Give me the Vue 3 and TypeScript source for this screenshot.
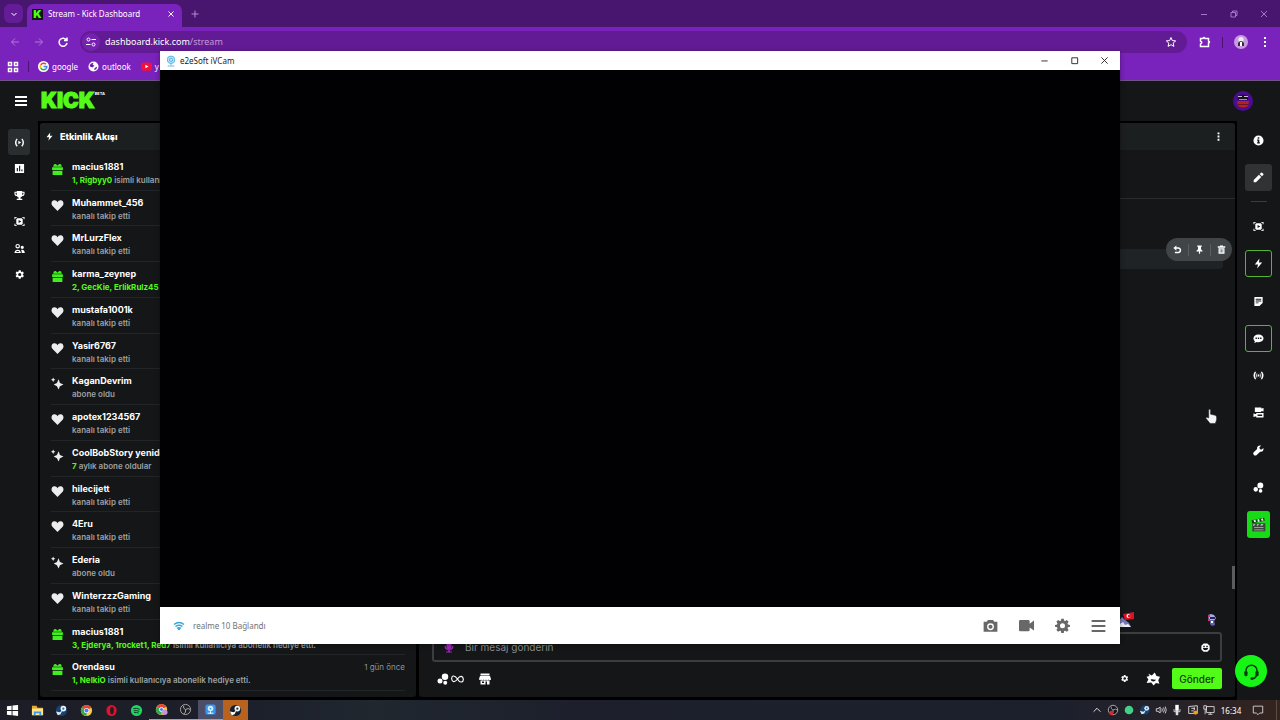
<script setup lang="ts">
import { ref } from 'vue'

type Kind = 'gift' | 'heart' | 'spark'

interface Activity {
  name: string
  kind: Kind
  lead?: string
  text: string
  time?: string
}

const icons: Record<string, string> = {
  gift: 'M2 8h20v5H2zM3 14.500h18V22H3zM5 3c2-2 5-1 7 2 2-3 5-4 7-2l1 4H4z',
  heart: 'M12 22 2.500 12.500C-.5 9 1 3 6 2.500c3-.2 5 1.500 6 3.500 1-2 3-3.700 6-3.500 5 .5 6.500 6.500 3.500 10z',
  spark: 'M14 4l2.500 7 6.500 3-6.500 3L14 23l-3-6-6-3 6-3zM4 1l1.300 2.700L8 5 5.300 6.300 4 9 2.700 6.300 0 5l2.700-1.300z',
  bolt: 'M14 1 4 14h7l-2 9L20 10h-7z',
  live: 'M6 3C1 8 1 16 6 21l2-2c-3.500-4-3.500-10 0-14zM18 3c5 5 5 13 0 18l-2-2c3.500-4 3.500-10 0-14zM9.500 8v8l6-4z',
  chart: 'M2 2h20v20H2zM6 11v7h2.500v-7zm5-5v12h2.500V6zm5 8v4h2.500v-4z',
  trophy: 'M6 2h12v2h5v4c0 3-2 5-5 5-1 2-2.500 3-4 3.500V19h4v3H6v-3h4v-2.500C8.500 16 7 15 6 13c-3 0-5-2-5-5V4h5zM3.500 6v2c0 1.500 1 2.500 2.500 2.700V6zM18 6v4.700c1.500-.2 2.500-1.200 2.500-2.700V6z',
  clip: 'M1 2h5v2H3v3H1zM18 2h5v5h-2V4h-3zM1 17h2v3h3v2H1zM21 17h2v5h-5v-2h3zM7 5h10l2 2v10l-2 2H7l-2-2V7zM10 8.500v7l6-3.500z',
  people: 'M8 2a5 5 0 1 1 0 10A5 5 0 0 1 8 2zM8 4.500a2.500 2.500 0 1 0 0 5 2.500 2.500 0 0 0 0-5zM1 22c0-10 14-10 14 0zM4.500 19.500h7c-1-3-6-3-7 0zM18 6a3.500 3.500 0 1 1 0 7 3.500 3.500 0 0 1 0-7zM17 22c0-3-.5-5-1.500-7 5-1.500 8 2 8 7z',
  gear: 'M19.400 13a7.500 7.500 0 0 0 0-2l2.200-1.700-2.200-3.800-2.600 1a8 8 0 0 0-1.700-1L14.700 2.500h-4.400L9.900 5.500a8 8 0 0 0-1.700 1l-2.600-1-2.200 3.800L5.600 11a7.500 7.500 0 0 0 0 2l-2.200 1.700 2.200 3.800 2.600-1a8 8 0 0 0 1.700 1l.4 3h4.400l.4-3a8 8 0 0 0 1.700-1l2.600 1 2.200-3.800zM12.500 15.500a3.500 3.500 0 1 1 0-7 3.500 3.500 0 0 1 0 7z',
  info: 'M12 1a11 11 0 1 0 0 22 11 11 0 0 0 0-22zM10.300 5h3.400v3.200h-3.400zM9 10h4.700v6H15v2.500H9V16h1.300v-3.500H9z',
  pencil: 'M1.500 22.500v-5L13 6l5 5L6.500 22.500zM14.500 4.500l3-3q1.500-1 3 .5l1.500 1.500q1.500 1.500.5 3l-3 3z',
  note: 'M3 2h18v13l-7 7H3zM6 6v2h12V6zm0 4v2h12v-2zm0 4v2h6v-2z',
  chat: 'M12 3c7 0 11 4 11 8.500S19 20 12 20c-2 0-3 0-4-.5L3 22l1-4.500c-2-1.500-3-3.500-3-6C1 7 5 3 12 3zM5.500 10v3h3v-3zm5 0v3h3v-3zm5 0v3h3v-3z',
  antenna: 'M4 4h3c-3 5-3 11 0 16H4C0 15 0 9 4 4zM20 4h-3c3 5 3 11 0 16h3c4-5 4-11 0-16zM9 6v12c-2.500-3-2.500-9 0-12zM15 6v12c2.500-3 2.500-9 0-12zM10.500 10h3v4h-3z',
  cameras: 'M4 1h14v2.500l5-1.500v8l-5-1.500V11H4zM7 13h16v10H7v-3l-6 2v-8l6 2zm3 3.500v3h10v-3z',
  wrench: 'M22.500 6.500 19 10l-4-1-1-4 3.500-3.500C13 0 8 3 9 8.500l-8 8c-2 4 2.500 8 6.500 6l8-8C21 16 24 11 22.500 6.500z',
  bubbles: 'M16 1a6.500 6.500 0 1 1 0 13 6.500 6.500 0 0 1 0-13zM6 11a5 5 0 1 1 0 10 5 5 0 0 1 0-10zM16.500 15.500a4 4 0 1 1 0 8 4 4 0 0 1 0-8z',
  undo: 'M9 1v5h5c10 0 11 16 0 16H5v-4h9c5 0 5-8 0-8H9v5L1 8z',
  pin: 'M6 1h12v3l-2 1v6l4 4v2h-6.500v6h-3v-6H4v-2l4-4V5L6 4z',
  trash: 'M8 1h8v2h6v4H2V3h6zM4 8.500h16V23H4zM7.500 11v9H9v-9zm3.700 0v9h1.600v-9zm3.800 0v9h1.500v-9z',
  shop: 'M3 1h18v4H3zM2 6h20l2 6c0 3-4 3-5 1-1 2-4 2-5 0-1 2-4 2-5 0-1 2-4 2-5 0-1 2-4 1-4-1zM3 15h18v8h-5v-6h-3v6H3zm3 2v3h4v-3z',
  smile: 'M7 1h10l6 6v10l-6 6H7l-6-6V7zM6 7v4h4V7zm8 0v4h4V7zM5 13c1 8 13 8 14 0z',
  badge: 'M4 3l6 3 5-5 3 6 6 1-3 6 2 6-6-1-4 4-4-5-8 1 3-6-3-5 5-1zM8 13c2 5 8 4 9 0-3 1-6-2-9 0z',
  mic: 'M12 1c3 0 5 2 5 5v6c0 6-10 6-10 0V6c0-3 2-5 5-5zM3 10h2.500c0 9 13 9 13 0H21c0 5-3 8-7.500 8.500V21H18v2H6v-2h4.500v-2.500C6 18 3 15 3 10z',
  photo: 'M8 3h8l2 3h5v16H1V6h5zM12 8.500a5.500 5.500 0 1 0 0 11 5.500 5.500 0 0 0 0-11zm0 2.200a3.300 3.300 0 1 1 0 6.600 3.300 3.300 0 0 1 0-6.600z',
  video: 'M2 3h13q2 0 2 2v4l7-5v16l-7-5v4q0 2-2 2H2q-2 0-2-2V5q0-2 2-2z',
  cogwheel: 'M10 1h4l.6 3.200 1.600.7L19 3l2.800 2.800-1.800 2.800.7 1.600L24 11v3l-3.300.8-.7 1.600 1.800 2.800L19 22l-2.800-1.800-1.600.7L14 24h-4l-.6-3.100-1.600-.7L5 22l-2.800-2.800L4 16.400l-.7-1.600L0 14v-3l3.300-.8.7-1.600-1.800-2.800L5 3l2.800 1.900 1.600-.7zM12 8.500a4 4 0 1 0 0 8 4 4 0 0 0 0-8z',
  lines: 'M1 3h22v3.200H1zm0 8h22v3.200H1zm0 8h22v3.200H1z',
}

const activities: Activity[] = [
  { name: 'macius1881', kind: 'gift', lead: '1, Rigbyy0', text: 'isimli kullanıcıya abonelik hediye etti.' },
  { name: 'Muhammet_456', kind: 'heart', text: 'kanalı takip etti' },
  { name: 'MrLurzFlex', kind: 'heart', text: 'kanalı takip etti' },
  { name: 'karma_zeynep', kind: 'gift', lead: '2, GecKie, ErlikRulz45', text: 'isimli kullanıcıya abonelik hediye etti.' },
  { name: 'mustafa1001k', kind: 'heart', text: 'kanalı takip etti' },
  { name: 'Yasir6767', kind: 'heart', text: 'kanalı takip etti' },
  { name: 'KaganDevrim', kind: 'spark', text: 'abone oldu' },
  { name: 'apotex1234567', kind: 'heart', text: 'kanalı takip etti' },
  { name: 'CoolBobStory yeniden', kind: 'spark', lead: '7', text: 'aylık abone oldular' },
  { name: 'hilecijett', kind: 'heart', text: 'kanalı takip etti' },
  { name: '4Eru', kind: 'heart', text: 'kanalı takip etti' },
  { name: 'Ederia', kind: 'spark', text: 'abone oldu' },
  { name: 'WinterzzzGaming', kind: 'heart', text: 'kanalı takip etti' },
  { name: 'macius1881', kind: 'gift', lead: '3, Ejderya, 1rocket1, Red7', text: 'isimli kullanıcıya abonelik hediye etti.' },
  { name: 'Orendasu', kind: 'gift', lead: '1, NelkiO', text: 'isimli kullanıcıya abonelik hediye etti.', time: '1 gün önce' },
]

const leftNav = ['live', 'chart', 'trophy', 'clip', 'people', 'gear']
const topTools = ['info', 'pencil']
const tools = ['clip', 'bolt', 'note', 'chat', 'antenna', 'cameras', 'wrench', 'bubbles', 'clapper']
const outlined = ['bolt', 'chat']
const cameraTools = ['photo', 'video', 'cogwheel', 'lines']
const message = ref('')
const address = 'dashboard.kick.com'
</script>

<template>
  <div class="desktop">
    <section class="browser">
      <div class="tabs">
        <button class="tab-menu" aria-label="Tabs"><svg viewBox="0 0 10 10"><path class="stroke" d="M2.500 4 5 6.500 7.500 4" /></svg></button>
        <div class="tab">
          <span class="favicon">K</span>
          <span class="tab-title">Stream - Kick Dashboard</span>
          <button class="tab-close" aria-label="Close tab"><svg viewBox="0 0 10 10"><path class="stroke" d="M2.500 2.500l5 5m0-5-5 5" /></svg></button>
        </div>
        <button class="new-tab" aria-label="New tab"><svg viewBox="0 0 10 10"><path class="stroke" d="M5 1.500v7M1.500 5h7" /></svg></button>
        <div class="win-buttons">
          <button aria-label="Minimize"><svg viewBox="0 0 10 10"><path class="thin" d="M2 5.500h6" /></svg></button>
          <button aria-label="Restore"><svg viewBox="0 0 10 10"><path class="thin" d="M2 3.500h4.500V8H2zM3.500 3.500V2H8v4.500H6.500" /></svg></button>
          <button aria-label="Close"><svg viewBox="0 0 10 10"><path class="thin" d="M2 2l6 6m0-6L2 8" /></svg></button>
        </div>
      </div>

      <div class="toolbar">
        <button class="tool dim" aria-label="Back"><svg viewBox="0 0 12 12"><path class="stroke" d="M10 6H2.500M6 2.500 2.500 6 6 9.500" /></svg></button>
        <button class="tool dim" aria-label="Forward"><svg viewBox="0 0 12 12"><path class="stroke" d="M2 6h7.500M6 2.500 9.500 6 6 9.500" /></svg></button>
        <button class="tool" aria-label="Reload"><svg viewBox="0 0 12 12"><path class="stroke bold" d="M9.500 4.200A4 4 0 1 0 10 7M10 1.500v3H7" /></svg></button>
        <div class="address">
          <button class="site" aria-label="Site settings"><svg viewBox="0 0 12 12"><path class="stroke" d="M6.500 3.500H11M1 8.500h4.500" /><circle class="stroke" cx="3.500" cy="3.500" r="1.500" /><circle class="stroke" cx="8.500" cy="8.500" r="1.500" /></svg></button>
          <span class="url">{{ address }}<span>/stream</span></span>
          <button class="star" aria-label="Bookmark"><svg viewBox="0 0 12 12"><path class="stroke" d="M6 1.500 7.300 4.600l3.400.3-2.500 2.200.7 3.300L6 8.700l-2.900 1.700.7-3.300L1.300 4.900l3.400-.3z" /></svg></button>
        </div>
        <button class="tool ext" aria-label="Extensions"><svg viewBox="0 0 12 12"><path class="stroke bold" d="M1.500 2.500H4Q5 .5 6 2.500h3.500V5q2 1 0 2v3.500h-8V8Q4 6.500 1.500 5z" /></svg></button>
        <i class="bar"></i>
        <button class="profile" aria-label="Profile"><svg viewBox="0 0 14 14"><circle cx="7" cy="7" r="7" fill="#c79be0" /><circle cx="7" cy="4.500" r="2.600" fill="#eee" /><path d="M4 11V8q3-4 6 0v3z" fill="#342c3e" /><path d="M6 7h2v4H6z" fill="#fff" /></svg></button>
        <button class="tool more" aria-label="Menu"><svg viewBox="0 0 12 12"><path fill="#fff" d="M5 1h2v2H5zm0 4h2v2H5zm0 4h2v2H5z" /></svg></button>
      </div>

      <nav class="bookmarks">
        <button class="tool" aria-label="Apps"><svg viewBox="0 0 12 12"><path class="stroke bold" d="M1.500 1.500h3v3h-3zM7.500 1.500h3v3h-3zM1.500 7.500h3v3h-3zM7.500 7.500h3v3h-3z" /></svg></button>
        <i class="bar"></i>
        <a href="#google"><svg viewBox="0 0 12 12"><circle cx="6" cy="6" r="6" fill="#fff" /><g fill="none" stroke-width="1.700"><path d="M8.700 3.500A3.600 3.600 0 0 0 3 4.200" stroke="#ea4335" /><path d="M3 4.200a3.600 3.600 0 0 0 0 3.600" stroke="#fbbc05" /><path d="M3 7.800a3.600 3.600 0 0 0 5.500.8" stroke="#34a853" /><path d="M8.500 8.600Q9.600 7.500 9.600 6H6" stroke="#4285f4" /></g></svg>google</a>
        <a href="#outlook"><svg viewBox="0 0 12 12"><circle cx="6" cy="6" r="5.500" fill="#fff" /><path d="M2 4q2-2 4-2l-1 2 2 1-2 2-3-1zM7 8l3-2q0 3-3 4z" fill="#6a1ea5" /></svg>outlook</a>
        <a href="#youtube"><svg viewBox="0 0 12 12"><rect y="1.500" width="12" height="9" rx="2.500" fill="#f2103c" /><path d="M4.800 4v4l3.400-2z" fill="#fff" /></svg>y</a>
      </nav>

      <header class="site-head">
        <button class="burger" aria-label="Menu"><svg viewBox="0 0 12 12"><path fill="#fff" d="M0 1h12v2H0zm0 4h12v2H0zm0 4h12v2H0z" /></svg></button>
        <a class="brand" href="#kick"><b>KICK</b><sup>BETA</sup></a>
        <button class="avatar" aria-label="Account"><svg viewBox="0 0 20 20"><circle cx="10" cy="10" r="10" fill="#4b0c91" /><path d="M5 5q5-3 10 0v4H5z" fill="#16131b" /><path d="M5 5h4v1H5zm6 0h4v1h-4z" fill="#c9bcd0" /><path d="M6 8h8v1H6z" fill="#a88f98" /><path d="M4 10h12l-1 5q-5 3-10 0z" fill="#b32222" /><path d="M5 13h10v1H5z" fill="#6b151c" /></svg></button>
      </header>

      <main class="workspace">
        <nav class="rail left-rail">
          <div class="nav-list">
            <button v-for="n in leftNav" :key="n" :aria-label="n" :class="{ active: n === 'live' }">
              <svg viewBox="0 0 24 24"><path :d="icons[n]" /></svg>
            </button>
          </div>
        </nav>

        <div class="panels">
          <section class="panel feed">
            <h2 class="panel-head"><svg viewBox="0 0 24 24"><path :d="icons.bolt" /></svg>Etkinlik Akışı</h2>
            <ul>
              <li v-for="(a, i) in activities" :key="i">
                <svg class="kind" :class="a.kind" viewBox="0 0 24 24"><path :d="icons[a.kind]" /></svg>
                <div class="entry">
                  <div class="line"><strong>{{ a.name }}</strong><time v-if="a.time">{{ a.time }}</time></div>
                  <p><b v-if="a.lead">{{ a.lead }}</b> {{ a.text }}</p>
                </div>
              </li>
            </ul>
          </section>

          <section class="panel chat">
            <div class="panel-head"><button class="dots" aria-label="Chat menu"><svg viewBox="0 0 24 24"><path d="M9.500 1h5v5h-5zm0 8.500h5v5h-5zm0 8.500h5v5h-5z" /></svg></button></div>
            <div class="pinned"></div>
            <div class="messages">
              <div class="message">
                <div class="actions">
                  <button v-for="n in ['undo', 'pin', 'trash']" :key="n" :aria-label="n"><svg viewBox="0 0 24 24"><path :d="icons[n]" /></svg></button>
                </div>
              </div>
              <i class="thumb"></i>
            </div>
            <div class="emotes">
              <svg viewBox="0 0 18 16"><path d="M6 2l11-2v7L8 8z" fill="#df1026" /><circle cx="11.500" cy="4" r="2" fill="#fff" /><circle cx="12.300" cy="4" r="1.500" fill="#df1026" /><path d="M2 9l3-4 3 3 4 3 2 4H1z" fill="#7779bb" /><path d="M3 12l3-2 2 3 3-1 3 3H2z" fill="#eee" /></svg>
              <svg viewBox="0 0 18 16"><path d="M5 3l3-1 3 1 2 3-2 3H6z" fill="#aaa9e9" /><path d="M7 5h5v2H7z" fill="#26235b" /><path d="M7 8h4l1 5-3 1-2-2z" fill="#6362b1" /><path d="M5 3h2v2H5zm0 4h2v2H5z" fill="#d43864" /><path d="M8 9h2v2H8z" fill="#fff" /></svg>
            </div>
            <form class="composer" @submit.prevent>
              <label class="field">
                <svg class="mic" viewBox="0 0 24 24"><path :d="icons.mic" /></svg>
                <input v-model="message" type="text" aria-label="Bir mesaj gönderin" placeholder="Bir mesaj gönderin" />
                <button type="button" aria-label="Emoji"><svg viewBox="0 0 24 24"><path :d="icons.smile" /></svg></button>
              </label>
              <div class="bottom">
                <button type="button" class="points" aria-label="Points">
                  <svg viewBox="0 0 24 24"><path :d="icons.bubbles" /></svg>
                  <svg class="infinity" viewBox="0 0 28 16"><path d="M14 8C6-3 1 2 1.500 8S8 17 14 8s12-6 12.500 0S20 19 14 8z" /></svg>
                </button>
                <button type="button" class="shop" aria-label="Shop"><svg viewBox="0 0 24 24"><path :d="icons.shop" /></svg></button>
                <button type="button" class="cog" aria-label="Settings"><svg viewBox="0 0 24 24"><path :d="icons.gear" /></svg></button>
                <button type="button" class="badge" aria-label="Identity"><svg viewBox="0 0 24 24"><path :d="icons.badge" /></svg></button>
                <button type="submit" class="send">Gönder</button>
              </div>
            </form>
          </section>
        </div>

        <nav class="rail right-rail">
          <button v-for="n in topTools" :key="n" :aria-label="n" :class="{ active: n === 'pencil' }"><svg viewBox="0 0 24 24"><path :d="icons[n]" /></svg></button>
          <i class="split"></i>
          <div class="tool-list">
            <button v-for="n in tools" :key="n" :aria-label="n" :class="{ outlined: outlined.includes(n), clapper: n === 'clapper' }">
              <svg v-if="n === 'clapper'" viewBox="0 0 24 24"><path d="M1 5 21 1l1 5L2 10z" fill="#17351b" /><path d="M4 5l3-1 1 4H5zm6-1 3-1 1 4-3 1zm6-1 3-1 1 4h-3z" fill="#e9eee9" /><path d="M2 10h21v13H2z" fill="#3c463e" /><path d="M4 11h3l-2 3H3zm6 0h3l-2 3H9zm6 0h4l-2 3h-3zM5 16h15v1H5zm0 4h15v1H5z" fill="#b3beb5" /></svg>
              <svg v-else viewBox="0 0 24 24"><path :d="icons[n]" /></svg>
            </button>
          </div>
        </nav>
      </main>
    </section>

    <section class="camera">
      <div class="camera-title">
        <svg viewBox="0 0 12 14"><circle cx="6" cy="5.500" r="4.500" fill="#bfe5f8" stroke="#48a9dd" /><circle cx="6" cy="5.500" r="2" fill="none" stroke="#48a9dd" /><path d="M2 13h8M6 10v2" stroke="#48a9dd" /></svg>
        <span>e2eSoft iVCam</span>
        <button aria-label="Minimize"><svg viewBox="0 0 10 10"><path class="thin" d="M1.500 5.500h7" /></svg></button>
        <button aria-label="Maximize"><svg viewBox="0 0 10 10"><path class="thin" d="M2 2h6.500v6.500H2z" /></svg></button>
        <button aria-label="Close"><svg viewBox="0 0 10 10"><path class="thin" d="M1.500 1.500l7 7m0-7-7 7" /></svg></button>
      </div>
      <div class="view"></div>
      <div class="camera-bar">
        <svg class="wifi" viewBox="0 0 12 10"><path d="M1 3.500q5-4 10 0M2.500 5.500q3.500-2.600 7 0M4 7.300q2-1.300 4 0" /><circle cx="6" cy="8.300" r="1" /></svg>
        <span>realme 10 Bağlandı</span>
        <button v-for="n in cameraTools" :key="n" :aria-label="n"><svg viewBox="0 0 24 24"><path :d="icons[n]" /></svg></button>
      </div>
    </section>

    <button class="support" aria-label="Support"><svg viewBox="0 0 24 24"><path d="M5 13v-2a7 7 0 0 1 14 0v2M18 17q-1 4-5 4" fill="none" stroke="#063b0a" stroke-width="2" /><rect x="3" y="11" width="4" height="7" rx="2" /><rect x="17" y="11" width="4" height="7" rx="2" /><circle cx="12.500" cy="21" r="1.800" /></svg></button>
    <svg class="pointer" viewBox="0 0 14 17"><path d="M4 1q1.500-1 2 .5V6l5 1.200q1.600.5 1.500 2V12q-.5 2-1.500 4H5.500L1 10.500Q1 8.500 4 10z" fill="#f4f4f4" stroke="#222" stroke-width=".6" /></svg>

    <footer class="taskbar">
      <div class="apps">
        <button aria-label="Start"><svg viewBox="0 0 14 14"><path fill="#fff" d="M1 2.500l5-.7v4.700H1zm6-.8L13 1v5.500H7zM1 7.500h5v4.700l-5-.7zm6 0h6V13l-6-.8z" /></svg></button>
        <button aria-label="Files"><svg viewBox="0 0 14 14"><path fill="#e5aa2d" d="M1 2h5l1 2h6v8H1z" /><path fill="#ffe492" d="M1 5h12v7H1z" /><path fill="#3d9ae0" d="M3 8h8v4H9v-2H5v2H3z" /></svg></button>
        <button aria-label="Steam"><svg viewBox="0 0 14 14"><circle cx="7" cy="7" r="6" fill="#17416e" /><circle cx="9" cy="5" r="3" fill="#eef5fb" /><circle cx="9" cy="5" r="1.200" fill="#376c9a" /><path d="M1 8l4 1 3-2-2 4-3 1z" fill="#dce9f4" /></svg></button>
        <button aria-label="Chrome"><svg viewBox="0 0 14 14"><circle cx="7" cy="7" r="6" fill="#ffcd40" /><path d="M7 7 1.800 4A6 6 0 0 1 12.200 4z" fill="#ea4335" /><path d="M7 7 1.800 4A6 6 0 0 0 7 13z" fill="#34a853" /><circle cx="7" cy="7" r="2.800" fill="#fff" /><circle cx="7" cy="7" r="2.200" fill="#4285f4" /></svg></button>
        <button aria-label="Opera"><svg viewBox="0 0 14 14"><ellipse cx="7" cy="7" rx="5.500" ry="6" fill="#dc142d" /><ellipse cx="7.500" cy="7" rx="2" ry="4" fill="#1c1f29" /></svg></button>
        <button aria-label="Spotify"><svg viewBox="0 0 14 14"><circle cx="7" cy="7" r="6" fill="#1ed760" /><path d="M3.500 5q4-1 7 .7M4 7.300q3-.8 6 .6M4.300 9.300q3-.6 5 .5" fill="none" stroke="#12331d" /></svg></button>
        <button class="running" aria-label="Chrome profile"><svg viewBox="0 0 14 14"><circle cx="7" cy="7" r="6" fill="#ffcd40" /><path d="M7 7 1.800 4A6 6 0 0 1 12.200 4z" fill="#ea4335" /><path d="M7 7 1.800 4A6 6 0 0 0 7 13z" fill="#34a853" /><circle cx="7" cy="7" r="2.200" fill="#4285f4" stroke="#fff" /><circle cx="10.500" cy="10" r="3" fill="#c694dc" /></svg></button>
        <button class="running" aria-label="OBS"><svg viewBox="0 0 14 14"><circle cx="7" cy="7" r="5.500" fill="#202128" stroke="#aaa" /><path d="M7 7q-3-1-2-4m2 4q3-2 5 0m-5 0q1 3-2 5" fill="none" stroke="#b0b0b0" /></svg></button>
        <button class="running focus" aria-label="iVCam"><svg viewBox="0 0 14 14"><rect x="1.500" y="1.500" width="11" height="11" rx="2" fill="#3497f0" /><circle cx="7" cy="6" r="3" fill="#d4edff" /><circle cx="7" cy="6" r="1" fill="#3497f0" /><path d="M4 11h6M7 9v2" stroke="#fff" /></svg></button>
        <button class="alert" aria-label="Steam update"><svg viewBox="0 0 14 14"><circle cx="7" cy="7" r="6" fill="#15202d" /><circle cx="9" cy="5" r="3" fill="#eef5fb" /><circle cx="9" cy="5" r="1.200" fill="#26313b" /><path d="M1 8l4 1 3-2-2 4-3 1z" fill="#fff" /></svg></button>
      </div>
      <div class="tray">
        <button aria-label="Hidden icons"><svg viewBox="0 0 14 14"><path d="M3 9l4-4 4 4" fill="none" stroke="#fff" /></svg></button>
        <button aria-label="OBS status"><svg viewBox="0 0 14 14"><circle cx="7" cy="7" r="5.500" fill="#17171b" stroke="#bbb" /><path d="M7 7q-3-1-2-4m2 4q3-2 5 0m-5 0q1 3-2 5" fill="none" stroke="#aaa" /><circle cx="5" cy="10.500" r="2.500" fill="#e02530" /></svg></button>
        <button aria-label="Online"><svg viewBox="0 0 14 14"><circle cx="7" cy="7" r="5" fill="#43cf85" /></svg></button>
        <button aria-label="Steam status"><svg viewBox="0 0 14 14"><circle cx="7" cy="7" r="5.500" fill="#17416e" /><circle cx="9" cy="5" r="2.800" fill="#d9edf9" /><circle cx="9" cy="5" r="1" fill="#376c9a" /><path d="M1 8l4 1 3-2-2 4-3 1z" fill="#dce9f4" /></svg></button>
        <button aria-label="Volume"><svg viewBox="0 0 14 14"><path d="M1.500 5.500h2l2.500-2v7l-2.500-2h-2zM8 5q1 2 0 4M10 4q1.700 3 0 6M12 3q2.200 4 0 8" fill="none" stroke="#ddd" /></svg></button>
        <button aria-label="Microphone"><svg viewBox="0 0 14 14"><path d="M5 1h4v7H5z" fill="#fff" /><path d="M3.500 6v3h7V6M7 9v4" stroke="#ddd" fill="none" /><path d="M5.500 8h3v5h-3z" fill="#ddd" /></svg></button>
        <button aria-label="Update"><svg viewBox="0 0 14 14"><path d="M2 3l10-1v9H2zM5 5h4M5 8h3" fill="none" stroke="#e8e8e8" /><path d="M8.500 4v3" stroke="#fff" /><circle cx="10" cy="10" r="2.500" fill="#f29b22" /></svg></button>
        <button aria-label="Network"><svg viewBox="0 0 14 14"><path d="M4 3h9v7H4zM6 12h5M8.500 10v2M1 2h3v4H1zM2.500 6v6" fill="none" stroke="#ddd" /></svg></button>
        <time>16:34</time>
        <button class="notice" aria-label="Notifications"><svg viewBox="0 0 14 14"><path d="M1.500 2.500h11v8H9l-2 2-2-2H1.500z" fill="none" stroke="#ddd" /></svg></button>
      </div>
    </footer>
  </div>
</template>

<style>
body { margin: 0; background: #000; }
</style>

<style scoped>
* { box-sizing: border-box; }
.desktop { position: relative; display: flex; flex-direction: column; height: 100vh; overflow: hidden; font-family: Inter, "Liberation Sans", sans-serif; color: #fff; }
button { display: flex; align-items: center; justify-content: center; flex: none; padding: 0; border: 0; background: none; color: inherit; font: inherit; }
svg { display: block; flex: none; }
a { color: inherit; text-decoration: none; }
.stroke { fill: none; stroke: currentColor; stroke-width: 1; }
.bold { stroke-width: 1.5; }
.thin { fill: none; stroke: currentColor; stroke-width: 1; }
.bar { flex: none; width: 1px; height: 11px; background: #4a1473; }

.browser { display: flex; flex: 1; flex-direction: column; min-height: 0; font-family: "Noto Sans", "Open Sans", sans-serif; }
.tabs { display: flex; align-items: flex-end; height: 27px; padding-left: 4px; background: #48156f; }
.tab-menu { width: 19px; height: 19px; margin-bottom: 4px; border-radius: 6px; background: #651c99; }
.tab-menu svg, .tab-close svg, .new-tab svg, .win-buttons svg { width: 10px; height: 10px; }
.tab { display: flex; align-items: center; width: 155px; height: 23px; margin-left: 4px; padding: 0 6px 3px 5px; border-radius: 7px 7px 0 0; background: #7a22bc; }
.favicon { width: 11px; height: 11px; margin-right: 5px; background: #101611; color: #53fc18; font: 900 11px/11px Inter, sans-serif; text-align: center; }
.tab-title { flex: 1; font-size: 8px; line-height: 12px; white-space: nowrap; }
.new-tab { width: 18px; height: 27px; margin-left: 4px; color: #b98cd8; }
.win-buttons { display: flex; margin-left: auto; padding-right: 1px; color: #a877c8; }
.win-buttons button { width: 30px; height: 27px; }
.toolbar { display: flex; align-items: center; height: 30px; padding: 0 3px; background: #7a22bc; }
.tool { width: 24px; height: 22px; }
.tool svg { width: 12px; height: 12px; }
.dim { color: #b179da; }
.address { display: flex; flex: 1; align-items: center; height: 22px; margin: 0 6px 0 5px; border-radius: 11px; background: #631b95; }
.site { width: 18px; height: 18px; margin-left: 2px; border-radius: 50%; background: #7523af; }
.site svg, .star svg { width: 12px; height: 12px; }
.url { flex: 1; margin-left: 5px; font-size: 9px; line-height: 14px; }
.url span { color: #c19adb; }
.star { width: 32px; height: 22px; }
.ext { margin-right: 5px; }
.profile { width: 24px; height: 22px; margin-left: 6px; }
.profile svg { width: 14px; height: 14px; }
.bookmarks { display: flex; align-items: center; height: 24px; padding: 0 1px 4px; border-bottom: 1px solid #6f5582; background: #7a22bc; }
.bookmarks .bar { margin: 0 9px 0 3px; }
.bookmarks a { display: flex; align-items: center; flex: none; gap: 3px; margin-right: 10px; font-size: 8px; line-height: 14px; }
.bookmarks a svg { width: 11px; height: 11px; }

.site-head { display: flex; align-items: center; flex: none; height: 40px; padding: 0 27px 0 15px; background: #141617; font-family: Inter, sans-serif; }
.burger svg { width: 12px; height: 12px; }
.brand { display: flex; align-items: flex-start; margin-left: 14px; color: #53fc18; }
.brand b { font-size: 21px; font-weight: 900; line-height: 20px; -webkit-text-stroke: 1px #53fc18; }
.brand sup { color: #fff; font-size: 4px; font-weight: 700; line-height: 6px; }
.avatar { margin-left: auto; }
.avatar svg { width: 20px; height: 20px; }

.workspace { display: flex; flex: 1; min-height: 0; background: #000; font-family: Inter, sans-serif; }
.rail { display: flex; flex: none; flex-direction: column; align-items: center; background: #141617; }
.rail svg { width: 11px; height: 11px; fill: #fff; }
.left-rail { width: 38px; padding-top: 8px; }
.nav-list { display: flex; flex-direction: column; justify-content: space-between; height: 159px; }
.nav-list button { width: 22px; height: 26px; border-radius: 3px; }
.nav-list .active { background: #2b2e30; }
.right-rail { width: 43px; padding-top: 6px; }
.right-rail button { width: 27px; height: 27px; border-radius: 3px; }
.right-rail .active { margin-top: 10px; background: #303234; }
.split { width: 16px; height: 1px; margin: 10px 0 11px; background: #3b3e40; }
.tool-list { display: flex; flex-direction: column; justify-content: space-between; align-items: center; height: 325px; }
.right-rail .outlined { border: 1px solid #58b33b; }
.right-rail .clapper { width: 23px; background: #16dc16; }
.clapper svg { width: 15px; height: 15px; }

.panels { display: flex; flex: 1; gap: 3px; min-width: 0; padding: 2px 2px 3px; }
.panel { display: flex; flex-direction: column; border-radius: 3px; background: #141617; }
.panel-head { display: flex; align-items: center; flex: none; gap: 6px; height: 27px; margin: 0; padding: 0 0 0 5px; border-radius: 3px 3px 0 0; background: #1c1f20; font-size: 9px; font-weight: 800; }
.panel-head svg { width: 9px; height: 9px; fill: #fff; }
.feed { width: 376px; }
.feed ul { display: grid; flex: 1; grid-auto-rows: 1fr; margin: 5px 11px 6px; padding: 0; list-style: none; }
.feed li { display: flex; min-width: 0; padding-top: 4px; border-bottom: 1px solid #222527; }
.kind { width: 13px; height: 13px; margin: 4px 8px 0 0; fill: #ededed; }
.kind.gift { fill: #42ed20; }
.entry { flex: 1; min-width: 0; }
.line { display: flex; align-items: center; justify-content: space-between; height: 15px; }
.line strong { font-size: 9px; font-weight: 700; white-space: nowrap; }
.line time { color: #909496; font-size: 8px; }
.entry p { margin: 0; color: #9da1a3; font-size: 8px; font-weight: 600; line-height: 13px; white-space: nowrap; }
.entry p b { color: #53fc18; font-weight: 700; }

.chat { flex: 1; min-width: 0; }
.dots { margin: 0 12px 0 auto; }
.pinned { flex: none; height: 49px; border-bottom: 1px solid #2a2d2f; }
.messages { position: relative; flex: 1; padding: 50px 12px 0 0; }
.message { position: relative; height: 20px; border-radius: 4px; background: #202325; }
.actions { position: absolute; right: -9px; top: -11px; display: flex; align-items: center; height: 23px; border-radius: 12px; background: #414548; }
.actions button { width: 22px; height: 12px; }
.actions button + button { border-left: 1px solid #5a5e60; }
.actions svg { width: 9px; height: 9px; fill: #fff; }
.thumb { position: absolute; right: 0; bottom: 21px; width: 3px; height: 23px; background: #5a5d5e; }
.emotes { display: flex; flex: none; justify-content: flex-end; gap: 68px; align-items: center; height: 22px; padding: 0 14px 2px 0; }
.emotes svg { width: 18px; height: 16px; }
.composer { flex: none; padding: 0 13px 8px; }
.field { display: flex; align-items: center; height: 30px; padding: 0 10px 0 9px; border: 2px solid #3b3e40; border-radius: 3px; }
.mic { width: 12px; height: 14px; fill: #a428c2; }
.field input { flex: 1; min-width: 0; margin: 0 0 0 10px; padding: 0; border: 0; outline: 0; background: none; color: #fff; font: 400 10px/14px Inter, sans-serif; }
.field input::placeholder { color: #8a8e90; opacity: 1; }
.field button svg { width: 9px; height: 9px; fill: #fff; }
.bottom { display: flex; align-items: center; height: 21px; margin-top: 6px; }
.bottom svg { width: 12px; height: 12px; fill: #fff; }
.points { gap: 2px; margin-left: 5px; }
.bottom .infinity { width: 13px; height: 8px; fill: none; stroke: #fff; stroke-width: 2.5; }
.shop { margin-left: 15px; }
.cog { margin-left: auto; }
.bottom .cog svg { width: 9px; height: 9px; }
.badge { margin: 0 12px 0 17px; }
.bottom .badge svg { width: 14px; height: 14px; }
.send { width: 50px; height: 21px; border-radius: 2px; background: #53fc18; color: #173812; font-size: 10px; font-weight: 500; }

.camera { position: absolute; top: 51px; right: 12.5%; bottom: 76px; left: 12.5%; display: flex; flex-direction: column; background: #fff; color: #222; box-shadow: 0 1px 5px #0006; font-family: "Noto Sans", sans-serif; }
.camera-title { display: flex; align-items: center; flex: none; height: 19px; padding: 0 1px 0 6px; font-size: 8px; }
.camera-title > svg { width: 10px; height: 12px; }
.camera-title span { flex: 1; margin-left: 4px; }
.camera-title button { width: 30px; height: 19px; }
.camera-title button svg { width: 9px; height: 9px; }
.view { flex: 1; background: #010103; }
.camera-bar { display: flex; align-items: center; flex: none; height: 37px; padding: 0 4px 0 13px; color: #727272; font-size: 8px; }
.wifi { width: 12px; height: 10px; fill: #249bd6; }
.wifi path { fill: none; stroke: #36a6da; stroke-width: 1.5; }
.camera-bar span { flex: 1; margin-left: 8px; }
.camera-bar button { width: 36px; height: 30px; }
.camera-bar button svg { width: 15px; height: 15px; fill: #686868; }

.support { position: absolute; right: 13px; bottom: 33px; width: 32px; height: 32px; border-radius: 50%; background: #16f516; }
.support svg { width: 19px; height: 19px; fill: #063b0a; }
.pointer { position: absolute; right: 62px; bottom: 295px; width: 13px; height: 17px; }

.taskbar { display: flex; flex: none; justify-content: space-between; height: 20px; background: linear-gradient(90deg, #1c1d26, #1c202b 20%, #20272f 29%, #1d202c 45%, #1c202d 82%, #262229 92%, #35241f); font-family: "Noto Sans", sans-serif; }
.apps { display: flex; width: 248px; }
.apps button { flex: 1; }
.apps svg { width: 13px; height: 13px; }
.apps .running { border-bottom: 1px solid #cf80dc; }
.apps .focus { background: #4b4e66; }
.apps .alert { background: #b7621f; }
.tray { display: flex; align-items: center; padding-right: 5px; border-right: 1px solid #5b4c46; margin-right: 3px; }
.tray button { width: 16px; height: 20px; }
.tray svg { width: 12px; height: 12px; }
.tray time { width: 28px; font-size: 8px; text-align: center; }
.tray .notice { width: 26px; }
</style>
